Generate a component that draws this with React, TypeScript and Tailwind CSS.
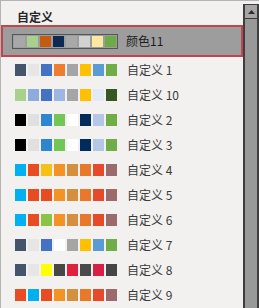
const selected = {
  name: '颜色11',
  colors: ['#a8a8a8', '#a9d18e', '#c55a11', '#0e2a52', '#a9a9a9', '#d3d2d2', '#fde8a0', '#6cab47'],
};

const schemes = [
  { name: '自定义 1', colors: ['#44546a', '#e7e6e6', '#4472c4', '#ed7d31', '#a5a5a5', '#ffc000', '#5b9bd5', '#70ad47'] },
  { name: '自定义 10', colors: ['#a9d18e', '#8faadc', '#4472c4', '#9db6e3', '#a5a5a5', '#ffc000', '#e2eaf5', '#375623'] },
  { name: '自定义 2', colors: ['#000000', '#e0e0e0', '#2e86d0', '#72c655', '#ffffff', '#002b5c', '#b4c7e7', '#70ad47'] },
  { name: '自定义 3', colors: ['#000000', '#e0e0e0', '#2e86d0', '#72c655', '#ffffff', '#002b5c', '#b4c7e7', '#70ad47'] },
  { name: '自定义 4', colors: ['#00b0f0', '#e84c22', '#f6c117', '#f39325', '#d4903f', '#e8782a', '#e64a2b', '#9b6b6b'] },
  { name: '自定义 5', colors: ['#00b0f0', '#e84c22', '#e84c22', '#f39325', '#d4903f', '#e8782a', '#e64a2b', '#9b6b6b'] },
  { name: '自定义 6', colors: ['#00b0f0', '#e84c22', '#8bc34a', '#f39325', '#d4903f', '#e8782a', '#e64a2b', '#9b6b6b'] },
  { name: '自定义 7', colors: ['#44546a', '#e7e6e6', '#4472c4', '#ffffff', '#a5a5a5', '#ffc000', '#5b9bd5', '#70ad47'] },
  { name: '自定义 8', colors: ['#44546a', '#e7e6e6', '#ffff00', '#474747', '#e0203c', '#4a4a4a', '#d81f45', '#454545'] },
  { name: '自定义 9', colors: ['#e84c22', '#00b0f0', '#e84c22', '#f39325', '#d4903f', '#e8782a', '#e64a2b', '#9b6b6b'] },
];

function Swatches({ colors }: { colors: string[] }) {
  return (
    <div className="flex gap-[2px]">
      {colors.map((c, i) => (
        <div key={i} className="w-[11px] h-[11px]" style={{ backgroundColor: c }} />
      ))}
    </div>
  );
}

export default function App() {
  return (
    <div
      className="w-[259px] h-[308px] flex bg-[#f2f1f0] border-t border-l border-[#b4b4b4] overflow-hidden"
      style={{ fontFamily: '"Noto Sans CJK SC", "Noto Sans", sans-serif' }}
    >
      <div className="w-[242px] shrink-0 flex flex-col">
        <div className="h-[24px] pt-[8px] pl-[16px] text-[12px] leading-[16px] font-bold text-[#262626]">
          自定义
        </div>

        {/* current scheme */}
        <div className="h-[32px] border-2 border-[#bd4650] bg-[#9d9d9d] flex items-center pl-[9px]">
          <div className="border border-[#555] px-[1px] py-[1px]">
            <Swatches colors={selected.colors} />
          </div>
          <span className="ml-[8px] text-[12px] leading-[16px] text-[#1c1c1c]">{selected.name}</span>
        </div>

        {schemes.map((s) => (
          <div key={s.name} className="h-[25px] shrink-0 flex items-center pl-[14px]">
            <div className="flex gap-[2px]">
              {s.colors.map((c, i) => (
                <div key={i} className="w-[11px] h-[12px]" style={{ backgroundColor: c }} />
              ))}
            </div>
            <span className="ml-[10px] text-[12px] leading-[16px] text-[#3a3a3a]">{s.name}</span>
          </div>
        ))}
      </div>

      {/* scrollbar */}
      <div className="flex-1 mt-[3px] flex flex-col border-t border-x-2 border-[#3e3e3e] bg-[#999]">
        <div className="h-[14px] bg-[#a6a6a6] border-b border-[#3a3a3a] flex items-center justify-center">
          <svg width="7" height="4" viewBox="0 0 7 4">
            <path d="M0 4 L3.5 0 L7 4 Z" fill="#2e2e2e" />
          </svg>
        </div>
        <div className="flex-1" />
      </div>
    </div>
  );
}
